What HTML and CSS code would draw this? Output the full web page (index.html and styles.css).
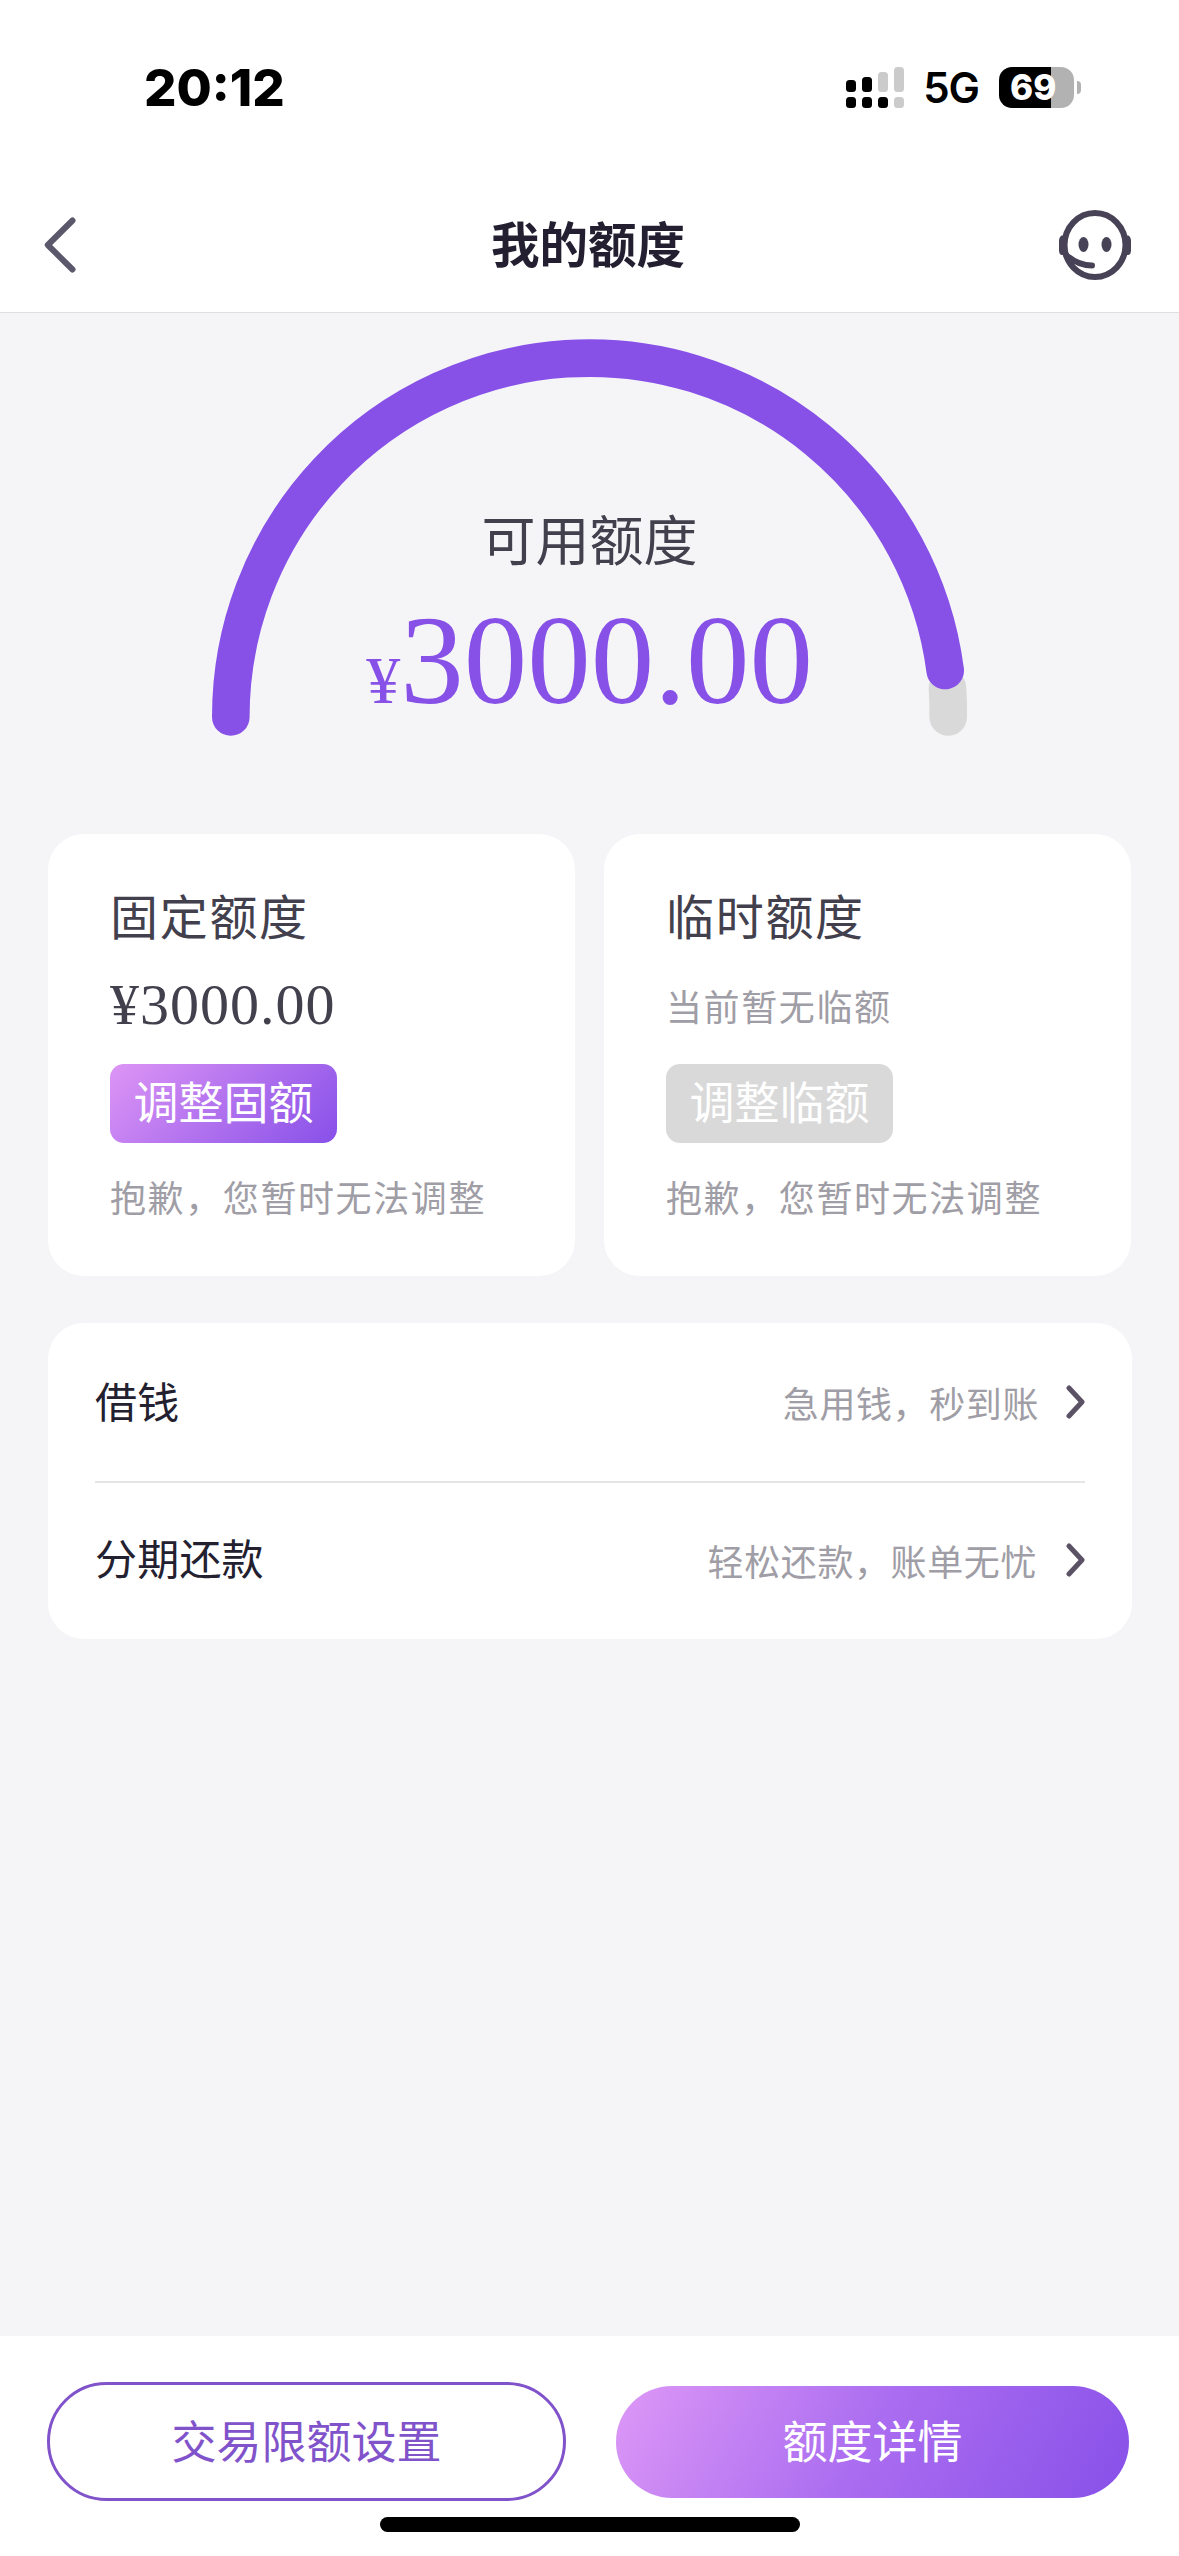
FILE: index.html
```html
<!DOCTYPE html>
<html lang="zh-CN">
<head>
<meta charset="utf-8">
<title>我的额度</title>
<link rel="stylesheet" href="styles.css">
</head>
<body>
<div class="page">
  <div class="status-bar">
    <span class="time">20:12</span>
    <div class="status-right">
      <svg class="signal" width="58" height="41" viewBox="0 0 58 41">
        <g fill="#000">
          <rect x="0" y="13" width="10" height="12" rx="3.5"/>
          <rect x="16" y="10" width="10" height="15" rx="3.5"/>
          <rect x="0" y="30" width="10" height="11" rx="3.5"/>
          <rect x="16" y="30" width="10" height="11" rx="3.5"/>
          <rect x="32" y="30" width="10" height="11" rx="3.5"/>
        </g>
        <g fill="#cbcbcb">
          <rect x="32" y="5" width="10" height="20" rx="3.5"/>
          <rect x="48" y="0" width="10" height="25" rx="3.5"/>
          <rect x="48" y="30" width="10" height="11" rx="3.5"/>
        </g>
      </svg>
      <span class="network">5G</span>
      <div class="battery"><span class="battery-body">69</span><span class="battery-cap"></span></div>
    </div>
  </div>

  <header class="nav">
    <svg class="back" width="32" height="56" viewBox="0 0 32 56">
      <path d="M28.5 3.5 L3.8 28 L28.5 52.5" fill="none" stroke="#5c586b" stroke-width="6" stroke-linecap="round" stroke-linejoin="round"/>
    </svg>
    <h1 class="nav-title">我的额度</h1>
    <svg class="service" width="74" height="72" viewBox="0 0 74 72">
      <g fill="none" stroke="#474255" stroke-linecap="round">
        <ellipse cx="37" cy="36" rx="30.5" ry="32" stroke-width="6"/>
        <path d="M8 46 C15 52 25 56.5 34 56.5" stroke-width="6"/>
      </g>
      <g fill="#474255">
        <path d="M7 26.5 H3.5 Q1 28 1 32 V42 Q1 45 3.5 46 H7 Z"/>
        <path d="M67 26.5 H70.5 Q73 28 73 32 V42 Q73 45 70.5 46 H67 Z"/>
        <ellipse cx="25.5" cy="35.5" rx="5" ry="7.5"/>
        <ellipse cx="48.5" cy="35.5" rx="5" ry="7.5"/>
      </g>
    </svg>
  </header>

  <main class="content">
    <section class="gauge">
      <svg class="gauge-arc" width="756" height="400" viewBox="0 0 756 400">
        <g fill="none" stroke-width="37.6" stroke-linecap="round">
          <path d="M735.5 350 A358.7 358.7 0 0 1 736.2 379" stroke="#d9d9d9"/>
          <path d="M18.8 379 A358.7 358.7 0 0 1 733.2 332.5" stroke="#8751e8"/>
        </g>
      </svg>
      <div class="gauge-text">
        <div class="gauge-label">可用额度</div>
        <div class="gauge-amount"><span class="gauge-currency">¥</span>3000.00</div>
      </div>
    </section>

    <section class="cards">
      <div class="card">
        <h2 class="card-title">固定额度</h2>
        <div class="card-value amount">¥3000.00</div>
        <button class="adjust">调整固额</button>
        <p class="hint">抱歉，您暂时无法调整</p>
      </div>
      <div class="card">
        <h2 class="card-title">临时额度</h2>
        <div class="card-value hint">当前暂无临额</div>
        <button class="adjust disabled">调整临额</button>
        <p class="hint">抱歉，您暂时无法调整</p>
      </div>
    </section>

    <section class="list">
      <div class="row">
        <span class="row-title">借钱</span>
        <span class="row-desc">急用钱，秒到账</span>
        <svg class="chevron" width="19" height="34" viewBox="0 0 19 34"><path d="M3 3 L16 17 L3 31" fill="none" stroke="#5b5266" stroke-width="5" stroke-linecap="round" stroke-linejoin="round"/></svg>
      </div>
      <div class="row">
        <span class="row-title">分期还款</span>
        <span class="row-desc">轻松还款，账单无忧</span>
        <svg class="chevron" width="19" height="34" viewBox="0 0 19 34"><path d="M3 3 L16 17 L3 31" fill="none" stroke="#5b5266" stroke-width="5" stroke-linecap="round" stroke-linejoin="round"/></svg>
      </div>
    </section>
  </main>

  <footer class="footer">
    <div class="actions">
      <button class="action outline">交易限额设置</button>
      <button class="action filled">额度详情</button>
    </div>
    <div class="home-indicator"></div>
  </footer>
</div>
</body>
</html>
```

FILE: styles.css
```css
* {
  box-sizing: border-box;
  margin: 0;
  padding: 0;
}

body {
  font-family: "Noto Sans CJK SC", sans-serif;
  color: #23202f;
  background: #fff;
}

svg {
  display: block;
}

button {
  border: 0;
  font: inherit;
}

.page {
  width: 1179px;
  height: 2556px;
  display: flex;
  flex-direction: column;
  background: #f5f5f8;
  overflow: hidden;
}

/* Status bar */
.status-bar {
  height: 177px;
  padding: 0 98px 2px 144px;
  display: flex;
  justify-content: space-between;
  align-items: center;
  background: #fff;
  font-family: Inter, sans-serif;
  color: #000;
}

.time {
  font-size: 51px;
  font-weight: 800;
  line-height: 60px;
}

.status-right {
  display: flex;
  align-items: center;
}

.network {
  margin-left: 19px;
  font-size: 42px;
  font-weight: 600;
  line-height: 42px;
  letter-spacing: -1px;
}

.battery {
  margin-left: 20px;
  display: flex;
  align-items: center;
  gap: 3px;
}

.battery-body {
  width: 75px;
  height: 41px;
  padding-left: 11px;
  border-radius: 13px;
  background: linear-gradient(90deg, #000 0 52px, #b2b2b2 52px);
  color: #fff;
  font-size: 35px;
  font-weight: 800;
  line-height: 41px;
}

.battery-cap {
  width: 4px;
  height: 13px;
  border-radius: 0 5px 5px 0;
  background: #b2b2b2;
}

/* Navigation */
.nav {
  height: 136px;
  padding: 0 47px 0 44px;
  display: grid;
  grid-template-columns: 1fr auto 1fr;
  align-items: center;
  background: #fff;
  border-bottom: 1px solid #dededf;
}

.nav-title {
  padding-bottom: 6px;
  font-size: 48.5px;
  font-weight: 700;
  line-height: 60px;
  color: #231f30;
}

.service {
  justify-self: end;
}

/* Main content */
.content {
  flex: 1;
}

.gauge {
  height: 521px;
  padding-top: 25px;
  display: grid;
  justify-items: center;
  align-items: start;
}

.gauge-arc,
.gauge-text {
  grid-area: 1 / 1;
}

.gauge-text {
  padding-top: 167px;
  text-align: center;
}

.gauge-label {
  font-size: 54px;
  line-height: 66px;
  color: #43404e;
}

.gauge-amount {
  margin-top: 9px;
  font-family: "Liberation Serif", serif;
  font-size: 127px;
  line-height: 160px;
  color: #8751e8;
}

.gauge-currency {
  font-size: 68px;
}

.cards {
  padding: 0 48px;
  display: grid;
  grid-template-columns: 1fr 1fr;
  gap: 29px;
}

.card {
  height: 442px;
  padding: 48px 62px 0;
  border-radius: 36px;
  background: #fff;
}

.card-title {
  font-size: 48px;
  font-weight: 400;
  line-height: 64px;
  letter-spacing: 1.7px;
  color: #43404e;
}

.card-value {
  height: 118px;
  line-height: 118px;
}

.amount {
  font-family: "Liberation Serif", serif;
  font-size: 58px;
  letter-spacing: 1px;
  color: #43404e;
}

.hint {
  font-size: 36px;
  letter-spacing: 1.6px;
  color: #9f9da5;
}

.adjust {
  display: block;
  width: 227px;
  height: 79px;
  padding-bottom: 6px;
  border-radius: 14px;
  background: linear-gradient(135deg, #dd95f5, #8750e8);
  color: #fff;
  font-size: 45px;
  line-height: 72px;
}

.disabled {
  background: #d9d9d9;
}

.adjust + .hint {
  margin-top: 23px;
  line-height: 60px;
  white-space: nowrap;
}

.list {
  margin: 47px 47px 0 48px;
  padding: 0 47px;
  border-radius: 36px;
  background: #fff;
}

.row {
  height: 158px;
  display: flex;
  align-items: center;
}

.row + .row {
  padding-bottom: 3px;
  border-top: 2px solid #e5e5e8;
}

.row-title {
  flex: 1;
  padding-bottom: 5px;
  font-size: 42px;
  line-height: 60px;
  letter-spacing: 0.2px;
}

.row-desc {
  margin-right: 27px;
  font-size: 36px;
  line-height: 60px;
  letter-spacing: 0.6px;
  color: #9f9da5;
}

.row + .row .row-desc {
  margin-right: 29px;
}

/* Bottom actions */
.footer {
  height: 220px;
  padding: 46px 50px 0 47px;
  background: #fff;
}

.actions {
  display: flex;
  justify-content: space-between;
  align-items: center;
}

.action {
  padding-bottom: 4px;
  border-radius: 60px;
  font-size: 45px;
}

.outline {
  width: 519px;
  height: 119px;
  border: 3px solid #8153cb;
  background: #fff;
  color: #8153cb;
}

.filled {
  width: 513px;
  height: 112px;
  background: linear-gradient(120deg, #dd98f6, #aa6cf0 50%, #8750e8);
  color: #fff;
}

.home-indicator {
  width: 420px;
  height: 15px;
  margin: 16px 0 0 333px;
  border-radius: 8px;
  background: #000;
}
```
